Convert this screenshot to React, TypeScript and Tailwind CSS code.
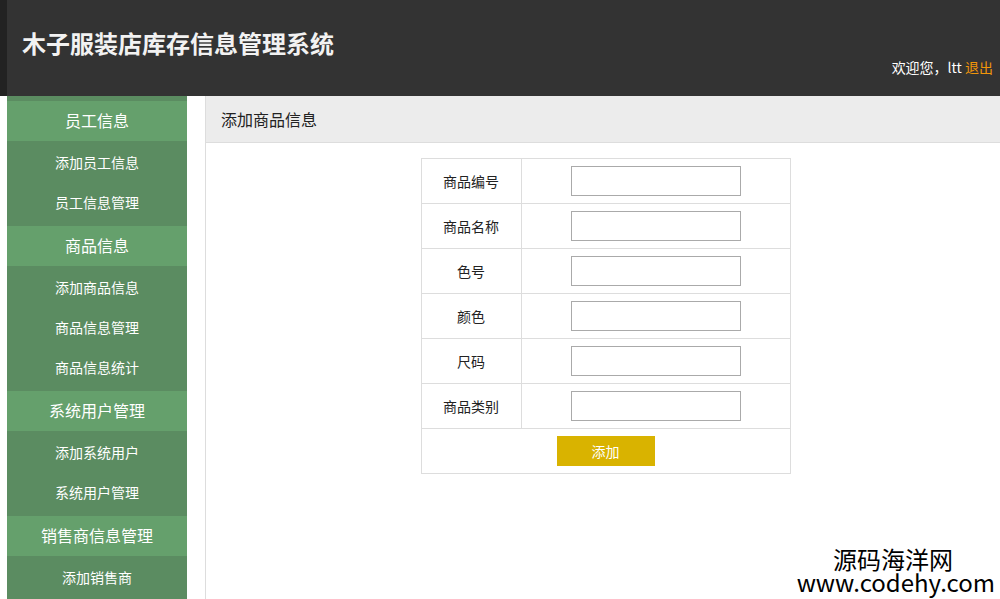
import React from 'react';

const font = { fontFamily: '"Noto Sans CJK SC", "Microsoft YaHei", sans-serif' };

const menu = [
  { title: '员工信息', items: ['添加员工信息', '员工信息管理'] },
  { title: '商品信息', items: ['添加商品信息', '商品信息管理', '商品信息统计'] },
  { title: '系统用户管理', items: ['添加系统用户', '系统用户管理'] },
  { title: '销售商信息管理', items: ['添加销售商', '销售商信息管理'] },
];

const fields = ['商品编号', '商品名称', '色号', '颜色', '尺码', '商品类别'];

export default function App() {
  return (
    <div className="relative w-[1000px] h-[599px] overflow-hidden bg-white" style={font}>
      {/* Header */}
      <header className="flex h-[96px] bg-[#333333]">
        <div className="w-[7px] bg-[#222222]" />
        <div className="flex-1 relative">
          <h1 className="absolute left-[15px] top-[27px] text-[24px] leading-[32px] font-bold text-[#f2f2f2]">
            木子服装店库存信息管理系统
          </h1>
          <div className="absolute right-[7px] top-[57px] text-[14px] leading-[20px] text-white">
            欢迎您，ltt <span className="text-[#f0950a]">退出</span>
          </div>
        </div>
      </header>

      <div className="flex h-[503px]">
        {/* Sidebar */}
        <div className="w-[7px]" />
        <nav className="w-[180px] bg-[#5b8c61] text-white">
          {menu.map((group) => (
            <div key={group.title} className="pt-[5px]">
              <div className="h-[40px] bg-[#65a06c] flex items-center justify-center text-[16px] pb-[3px]">
                {group.title}
              </div>
              {group.items.map((it) => (
                <div key={it} className="h-[40px] flex items-center justify-center text-[14px] pt-[3px]">
                  {it}
                </div>
              ))}
            </div>
          ))}
        </nav>
        <div className="w-[18px]" />

        {/* Content */}
        <main className="flex-1 border-l border-[#dddddd]">
          <div className="h-[47px] bg-[#ececec] border-b border-[#dddddd] flex items-center pl-[15px] text-[16px] text-[#222222]">
            添加商品信息
          </div>
          <div className="flex justify-center pt-[15px] pl-[5px]">
            <table className="w-[370px] border-collapse text-[14px] text-[#222222]">
              <tbody>
                {fields.map((f) => (
                  <tr key={f} className="h-[45px]">
                    <td className="w-[100px] border border-[#dddddd] text-center">{f}</td>
                    <td className="border border-[#dddddd]">
                      <div className="flex justify-center">
                        <input className="w-[170px] h-[30px] border border-[#aaaaaa] outline-none bg-white" />
                      </div>
                    </td>
                  </tr>
                ))}
                <tr className="h-[45px]">
                  <td colSpan={2} className="border border-[#dddddd]">
                    <div className="flex justify-center">
                      <button className="w-[98px] h-[30px] bg-[#d9b300] text-white text-[14px]">添加</button>
                    </div>
                  </td>
                </tr>
              </tbody>
            </table>
          </div>
        </main>
      </div>

      {/* Watermark */}
      <div className="absolute right-[5px] bottom-[6px] text-right text-black text-[24px] leading-[23px]">
        <div className="pr-[42px]">源码海洋网</div>
        <div>www.codehy.com</div>
      </div>
    </div>
  );
}
